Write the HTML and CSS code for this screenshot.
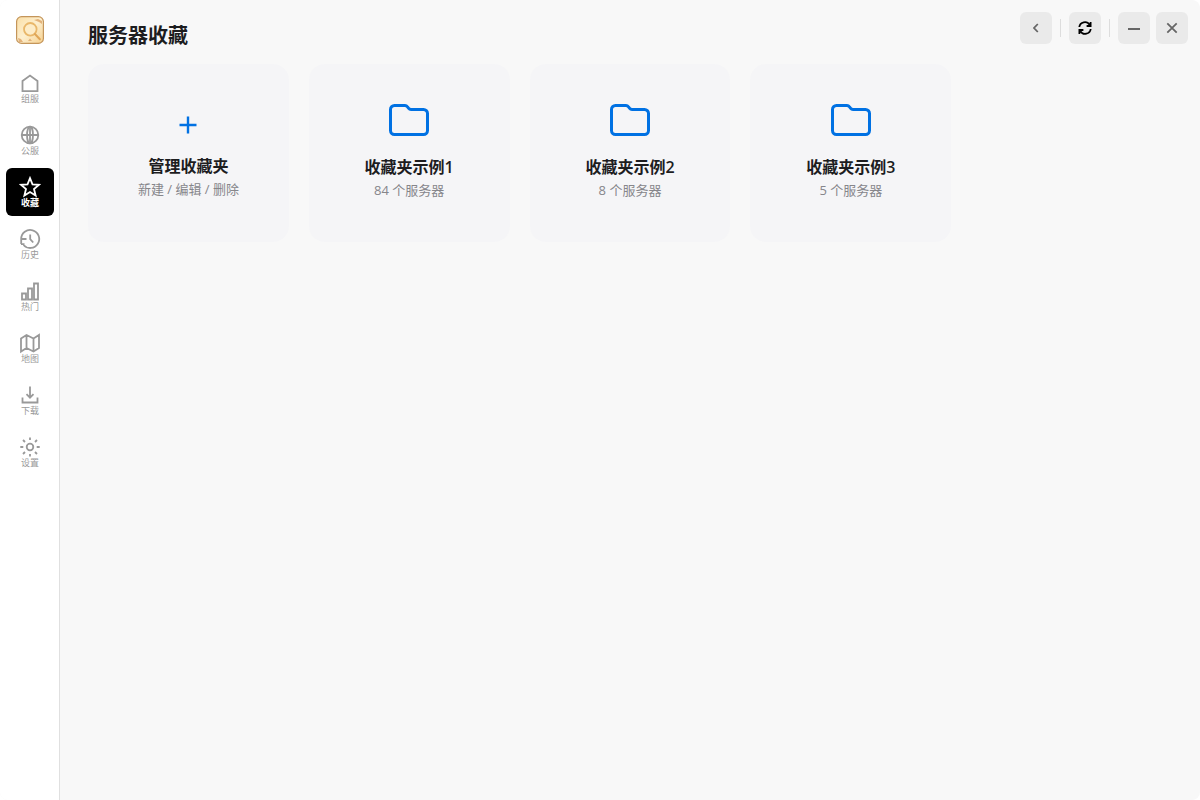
FILE: index.html
```html
<!DOCTYPE html>
<html lang="zh-CN">
<head>
    <meta charset="UTF-8">
    <meta name="viewport" content="width=device-width, initial-scale=1.0">
    <title>服务器收藏</title>
    <link rel="stylesheet" href="styles.css">
</head>
<body>
    <div class="app">
        <aside class="sidebar">
            <svg class="logo" viewBox="0 0 28 28">
                <defs>
                    <linearGradient id="logo-bg" x1="0" y1="0" x2="1" y2="1">
                        <stop offset="0" stop-color="#fbdfa6"/>
                        <stop offset="0.5" stop-color="#fdefcf"/>
                        <stop offset="1" stop-color="#f6d08d"/>
                    </linearGradient>
                </defs>
                <rect x="0.6" y="0.6" width="26.8" height="26.8" rx="5" fill="url(#logo-bg)" stroke="#c4955a" stroke-width="1.2"/>
                <path d="M18 4l4-1 4 2v3l-3-2zM2 22l3 1 2 3H3zM12 25l2-2.500 2 2.500z" fill="#e3b27a"/>
                <circle cx="14.3" cy="13.3" r="6.300" fill="#fdecc8" stroke="#e9b76a" stroke-width="1.800"/>
                <path d="M18.900 18l5 5.300" stroke="#e0a658" stroke-width="2" stroke-linecap="round"/>
            </svg>
            <nav class="nav">
                <a class="nav-item">
                    <svg class="icon" viewBox="0 0 24 24"><path d="M4.500 10L12 4.500l7.500 5.500V20.200h-15z"/></svg>
                    <span>组服</span>
                </a>
                <a class="nav-item">
                    <svg class="icon" viewBox="0 0 24 24"><circle cx="12" cy="12" r="8.300"/><ellipse cx="12" cy="12" rx="3" ry="8.300"/><path d="M3.500 12h17M12 3.500v17"/></svg>
                    <span>公服</span>
                </a>
                <a class="nav-item active">
                    <svg class="icon" viewBox="0 0 24 24"><path d="M12 3.200l2.500 6.100 6.500.500-5 4.200 1.600 6.500-5.600-3.500-5.600 3.500L8 14 3 9.800l6.500-.500z"/></svg>
                    <span>收藏</span>
                </a>
                <a class="nav-item">
                    <svg class="icon" viewBox="0 0 24 24"><path d="M3.200 17V12A9 9 0 1 1 5.500 18M3 17.200h3.500M3.500 12h5M12.200 7.500v4.700l3 3.300"/></svg>
                    <span>历史</span>
                </a>
                <a class="nav-item">
                    <svg class="icon" viewBox="0 0 24 24"><path d="M4 14.500h4v6H4zM10 9.500h4v11h-4zM16 4.500h4v16h-4z"/></svg>
                    <span>热门</span>
                </a>
                <a class="nav-item">
                    <svg class="icon" viewBox="0 0 24 24"><path d="M3 7.500L8.500 4l7 3.500L21 4v13L15.500 20.500l-7-3.500L3 20.500zM8.500 4v13M15.500 7.500v13"/></svg>
                    <span>地图</span>
                </a>
                <a class="nav-item">
                    <svg class="icon" viewBox="0 0 24 24"><path d="M4.500 14.500v5h15v-5M12 3.500v11M8.500 11.200L12 14.700l3.500-3.500"/></svg>
                    <span>下载</span>
                </a>
                <a class="nav-item">
                    <svg class="icon" viewBox="0 0 24 24"><circle cx="12" cy="12" r="3.300"/><path d="M12 2.500v2.500M12 19v2.500M2.300 12h3M18.700 12h3M5 5l2 2M17 17l2 2M5 19l2-2M17 7l2-2"/></svg>
                    <span>设置</span>
                </a>
            </nav>
        </aside>

        <main class="main">
            <header class="header">
                <h1>服务器收藏</h1>
                <div class="controls">
                    <button class="btn"><svg viewBox="0 0 16 16"><path d="M9.800 4L6 8l3.800 4"/></svg></button>
                    <span class="divider"></span>
                    <button class="btn refresh"><svg viewBox="0 0 16 16"><path d="M2.300 7a5.600 5.600 0 0 1 10.300-2.200M13.600 2v4H9.600M13.700 9a5.600 5.600 0 0 1-10.300 2.200M2.400 14v-4h4"/></svg></button>
                    <span class="divider"></span>
                    <button class="btn"><svg viewBox="0 0 16 16"><path d="M2 9h12"/></svg></button>
                    <button class="btn close"><svg viewBox="0 0 16 16"><path d="M3.300 3.300l9.400 9.400M12.700 3.300l-9.400 9.400"/></svg></button>
                </div>
            </header>

            <section class="grid">
                <div class="card manage">
                    <svg class="plus" viewBox="0 0 40 40"><path d="M20 11.500v17M11.500 20h17"/></svg>
                    <h3>管理收藏夹</h3>
                    <p>新建 / 编辑 / 删除</p>
                </div>
                <div class="card">
                    <svg class="folder" viewBox="0 0 48 48"><path d="M9.500 9.500H20q1.500 0 2.300 1.100l1.400 1.800q.8 1.100 2.300 1.100h12.500a4 4 0 0 1 4 4v17a4 4 0 0 1-4 4h-29a4 4 0 0 1-4-4v-21a4 4 0 0 1 4-4z"/></svg>
                    <h3>收藏夹示例1</h3>
                    <p>84 个服务器</p>
                </div>
                <div class="card">
                    <svg class="folder" viewBox="0 0 48 48"><path d="M9.500 9.500H20q1.500 0 2.300 1.100l1.400 1.800q.8 1.100 2.300 1.100h12.500a4 4 0 0 1 4 4v17a4 4 0 0 1-4 4h-29a4 4 0 0 1-4-4v-21a4 4 0 0 1 4-4z"/></svg>
                    <h3>收藏夹示例2</h3>
                    <p>8 个服务器</p>
                </div>
                <div class="card">
                    <svg class="folder" viewBox="0 0 48 48"><path d="M9.500 9.500H20q1.500 0 2.300 1.100l1.400 1.800q.8 1.100 2.300 1.100h12.500a4 4 0 0 1 4 4v17a4 4 0 0 1-4 4h-29a4 4 0 0 1-4-4v-21a4 4 0 0 1 4-4z"/></svg>
                    <h3>收藏夹示例3</h3>
                    <p>5 个服务器</p>
                </div>
            </section>
        </main>
    </div>
</body>
</html>
```

FILE: styles.css
```css
* {
    box-sizing: border-box;
    margin: 0;
    padding: 0;
}

body {
    font-family: 'Open Sans', 'Noto Sans CJK SC', sans-serif;
    background: #fff;
    color: #1d1d1f;
    overflow: hidden;
}

.app {
    display: flex;
    height: 100vh;
    background: #f8f8f8;
    border-radius: 8px;
    overflow: hidden;
}

.sidebar {
    width: 60px;
    background: #fff;
    border-right: 1px solid #e0e0e0;
    padding: 16px 5px 0 6px;
    display: flex;
    flex-direction: column;
    align-items: center;
}

.logo {
    width: 28px;
    height: 28px;
    margin-bottom: 20px;
}

.nav {
    display: flex;
    flex-direction: column;
    gap: 4px;
}

.nav-item {
    width: 48px;
    height: 48px;
    border-radius: 6px;
    color: #999;
    display: flex;
    flex-direction: column;
    align-items: center;
    padding-top: 7px;
    font-size: 9px;
    line-height: 8px;
}

.nav-item.active {
    background: #000;
    color: #fff;
    font-weight: bold;
}

.icon {
    width: 24px;
    height: 24px;
    fill: none;
    stroke: currentColor;
    stroke-width: 1.8;
}

.main {
    flex: 1;
    padding: 12px 28px;
}

.header {
    display: flex;
    justify-content: space-between;
    height: 52px;
}

.header h1 {
    font-size: 20px;
    line-height: 28px;
    padding-top: 10px;
}

.controls {
    display: flex;
    align-items: center;
    height: 32px;
    margin-right: -16px;
}

.btn {
    width: 32px;
    height: 32px;
    border: none;
    border-radius: 6px;
    background: #eaeaea;
    color: #666;
    display: flex;
    align-items: center;
    justify-content: center;
}

.btn svg {
    width: 16px;
    height: 16px;
    fill: none;
    stroke: currentColor;
    stroke-width: 1.8;
}

.btn.refresh {
    color: #000;
}

.btn.close {
    margin-left: 6px;
}

.divider {
    width: 1px;
    height: 18px;
    background: #ddd;
    margin: 0 8px;
}

.grid {
    display: grid;
    grid-template-columns: repeat(auto-fill, minmax(200px, 1fr));
    gap: 20px;
}

.card {
    height: 178px;
    background: #f5f5f7;
    border-radius: 16px;
    padding-top: 32px;
    text-align: center;
}

.card svg {
    display: block;
    margin: 0 auto;
    fill: none;
    stroke: #0071e3;
}

.folder {
    width: 48px;
    height: 48px;
    stroke-width: 3;
}

.plus {
    width: 40px;
    height: 40px;
    stroke-width: 2.4;
}

.card h3 {
    font-size: 16px;
    line-height: 22px;
    margin-top: 12px;
    font-weight: 600;
}

.card p {
    font-size: 13px;
    line-height: 18px;
    margin-top: 3px;
    color: #86868b;
}

.card.manage {
    padding-top: 41px;
}

.manage h3 {
    margin-top: 10px;
}
```
